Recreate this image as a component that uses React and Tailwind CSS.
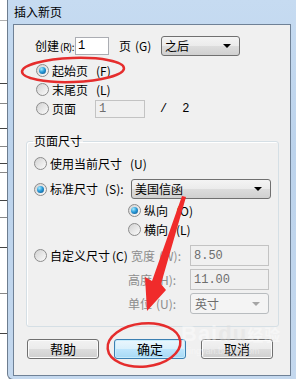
import React from 'react';

const FONT = { fontFamily: '"Noto Sans CJK SC", "Liberation Sans", sans-serif' };
const MONO = { fontFamily: '"Liberation Mono", monospace' };

const Radio = ({ checked }) => (
  <span className="w-[13px] h-[13px] shrink-0 rounded-full border border-[#8c8c8c] bg-[linear-gradient(135deg,#d2d2d2,#fbfbfb)] flex items-center justify-center">
    {checked && (
      <span className="w-[7px] h-[7px] rounded-full bg-[radial-gradient(circle_at_35%_30%,#a6ecff_0%,#2a9ad8_45%,#0b4f86_100%)]" />
    )}
  </span>
);

const Arrow = ({ color = '#000' }) => (
  <svg width="8" height="4" viewBox="0 0 8 4">
    <path d="M0 0 L8 0 L4 4 Z" fill={color} />
  </svg>
);

const Combo = ({ value, width, disabled }) => (
  <div
    className={
      disabled
        ? 'h-[21px] rounded-[3px] border border-[#b8bcbf] bg-[#f4f4f4] text-[#6d6d6d] flex items-center pl-[4px] pr-[8px]'
        : 'h-[20px] rounded-[3px] border border-[#707070] bg-[linear-gradient(#f4f4f4_0%,#ebebeb_50%,#dddddd_50%,#d0d0d0_100%)] flex items-center pl-[3px] pr-[8px]'
    }
    style={{ width }}
  >
    <span className="flex-1">{value}</span>
    <Arrow color={disabled ? '#a5a5a5' : '#000'} />
  </div>
);

const Field = ({ value, width, disabled, h = 20 }) => (
  <div
    className={
      disabled
        ? 'shrink-0 border border-[#c3c3c3] bg-[#f0f0f0] text-[#6d6d6d] flex items-center pl-[3px]'
        : 'shrink-0 border border-[#abadb3] bg-white text-black flex items-center pl-[2px]'
    }
    style={{ width, height: h, ...MONO }}
  >
    {value}
  </div>
);

const Button = ({ children, primary }) => (
  <div
    className={
      primary
        ? 'w-[72px] h-[20px] rounded-[3px] border border-[#3c7fb1] bg-[linear-gradient(#eaf6fd_0%,#d9f0fc_50%,#bee6fd_50%,#a7d9f5_100%)] shadow-[inset_0_0_0_1px_#c8ecfc] flex items-center justify-center text-[13px]'
        : 'w-[72px] h-[20px] rounded-[3px] border border-[#707070] bg-[linear-gradient(#f2f2f2_0%,#ebebeb_50%,#dddddd_50%,#cfcfcf_100%)] shadow-[inset_0_0_0_1px_#fbfbfb] flex items-center justify-center text-[13px]'
    }
  >
    {children}
  </div>
);

export default function App() {
  return (
    <div className="relative w-[296px] h-[379px] overflow-hidden bg-white flex text-[12px] text-black" style={FONT}>
      {/* document behind the dialog */}
      <div className="w-[7px] flex flex-col">
        <div className="h-[21px] border-b border-[#b0b0b0]" />
        <div className="h-[63px] border-b border-[#444]" />
        <div className="h-[20px] border-b border-[#888]" />
        <div className="h-[25px] border-b border-[#444]" />
        <div className="h-[18px] border-b border-[#888]" />
        <div className="h-[17px] border-b border-[#444]" />
        <div className="h-[9px] border-b border-[#888]" />
        <div className="h-[28px] border-b border-[#444]" />
        <div className="h-[17px] border-b border-[#888]" />
        <div className="h-[30px] border-b border-[#444]" />
        <div className="h-[46px] border-b border-[#888]" />
        <div className="h-[40px] border-b border-[#444]" />
      </div>

      {/* window */}
      <div className="w-[289px] h-[380px] rounded-bl-[6px] border-l border-b border-[#6d7d8f] bg-[linear-gradient(180deg,#c6dbf1_0%,#bcd3ec_40%,#c4d8ee_100%)] flex flex-col">
        <div className="h-[24px] flex items-center pl-[6px] text-[12px] text-black">插入新页</div>
        <div className="flex pl-[5px]">
          <div className="w-[278px] h-[352px] border border-[#6f8196] bg-[#f0f0f0] flex flex-col">
            {/* create row */}
            <div className="h-[20px] mt-[11px] pl-[21px] flex items-center">
              <span className="w-[40px] shrink-0 whitespace-nowrap">创建<span className="ml-[1px] text-[10px] tracking-[-0.5px]">(R):</span></span>
              <Field value="1" width={34} h={18} />
              <span className="ml-[10px] w-[42px] whitespace-nowrap">页<span className="ml-[4px]">(G)</span></span>
              <Combo value="之后" width={79} />
            </div>

            <div className="h-[19px] mt-[5px] pl-[22px] flex items-center gap-[3px]">
              <Radio checked />
              <span>起始页<span className="ml-[8px]">(F)</span></span>
            </div>
            <div className="h-[19px] pl-[22px] flex items-center gap-[3px]">
              <Radio />
              <span>末尾页<span className="ml-[8px]">(L)</span></span>
            </div>
            <div className="h-[19px] pl-[22px] flex items-center gap-[3px]">
              <Radio />
              <span className="w-[40px]">页面</span>
              <Field value="1" width={50} h={18} disabled />
              <span className="ml-[12px]" style={MONO}>/</span>
              <span className="ml-[12px]" style={MONO}>2</span>
            </div>

            {/* page size group */}
            <fieldset className="mt-[15px] ml-[12px] w-[253px] rounded-[3px] border border-[#d5dfe5] shadow-[inset_1px_1px_0_#fff] pb-[12px]">
              <legend className="ml-[6px] px-[1px] leading-[16px]">页面尺寸</legend>
              <div className="h-[19px] mt-[5px] pl-[7px] flex items-center gap-[3px]">
                <Radio />
                <span>使用当前尺寸<span className="ml-[8px]">(U)</span></span>
              </div>
              <div className="h-[20px] mt-[6px] pl-[7px] flex items-center gap-[3px]">
                <Radio checked />
                <span className="w-[78px] whitespace-nowrap">标准尺寸<span className="ml-[7px]">(S):</span></span>
                <Combo value="美国信函" width={140} />
              </div>
              <div className="h-[19px] mt-[2px] pl-[101px] flex items-center gap-[3px]">
                <Radio checked />
                <span>纵向<span className="ml-[8px]">(O)</span></span>
              </div>
              <div className="h-[19px] pl-[101px] flex items-center gap-[3px]">
                <Radio />
                <span>横向<span className="ml-[8px]">(L)</span></span>
              </div>
              <div className="h-[21px] mt-[6px] pl-[7px] flex items-center gap-[3px]">
                <Radio />
                <span className="w-[78px] whitespace-nowrap">自定义尺寸<span className="ml-[2px]">(C)</span></span>
                <span className="w-[56px] whitespace-nowrap text-[#8d8d8d]">宽度<span className="ml-[4px]">(W):</span></span>
                <Field value="8.50" width={79} h={21} disabled />
              </div>
              <div className="h-[21px] mt-[3px] pl-[101px] flex items-center">
                <span className="w-[62px] whitespace-nowrap text-[#8d8d8d]">高度<span className="ml-[4px]">(H):</span></span>
                <Field value="11.00" width={79} h={21} disabled />
              </div>
              <div className="h-[21px] mt-[3px] pl-[101px] flex items-center">
                <span className="w-[62px] whitespace-nowrap text-[#8d8d8d]">单位<span className="ml-[4px]">(U):</span></span>
                <Combo value="英寸" width={79} disabled />
              </div>
            </fieldset>

            {/* buttons */}
            <div className="mt-[12px] pl-[13px] flex gap-[15px]">
              <Button>帮助</Button>
              <Button primary>确定</Button>
              <Button>取消</Button>
            </div>
          </div>
        </div>
      </div>

      {/* baidu watermark */}
      <div className="absolute left-[181px] top-[322px] flex flex-col items-start pointer-events-none opacity-40">
        <span className="text-[22px] font-bold leading-[24px] text-white tracking-[1px]" style={{ fontFamily: '"Liberation Sans", sans-serif' }}>
          Bai<span className="text-[#dddddd]">du</span><span className="text-[16px]" style={FONT}>经验</span>
        </span>
        <span className="text-[9px] leading-[10px] text-white ml-[6px]" style={{ fontFamily: '"Liberation Sans", sans-serif' }}>jingyan.baidu.com</span>
      </div>

      {/* red annotations */}
      <svg className="absolute left-0 top-0 pointer-events-none" width="296" height="379" viewBox="0 0 296 379">
        <ellipse cx="73" cy="70" rx="51" ry="12" transform="rotate(-2 73 70)" fill="none" stroke="#e52d2d" strokeWidth="2.5" />
        <ellipse cx="144" cy="345" rx="36.5" ry="21.5" transform="rotate(-6 144 345)" fill="none" stroke="#e52d2d" strokeWidth="2.5" />
        <polygon points="182,196 186,197 161,284 166,290 147,311 145,277 152,281" fill="#f02b2b" />
      </svg>
    </div>
  );
}
